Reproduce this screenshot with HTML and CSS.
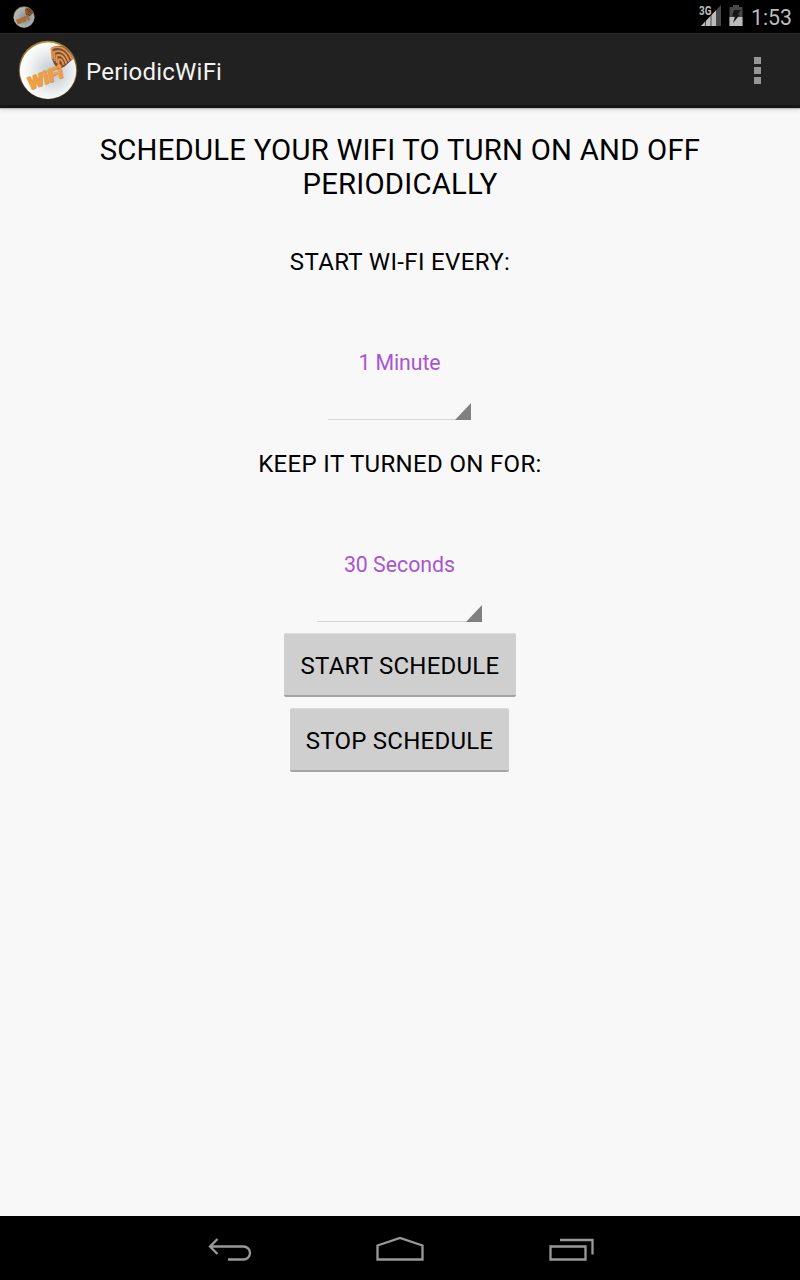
FILE: index.html
```html
<!DOCTYPE html>
<html lang="en">
<head>
<meta charset="utf-8">
<title>PeriodicWiFi</title>
<link rel="stylesheet" href="styles.css">
</head>
<body>
<svg width="0" height="0" class="defs" aria-hidden="true">
  <defs>
    <radialGradient id="disc" cx="58%" cy="52%" r="55%">
      <stop offset="0" stop-color="#bcc2c8"/><stop offset=".35" stop-color="#d5dadd"/><stop offset=".75" stop-color="#f1f4f4"/><stop offset="1" stop-color="#fdfdfd"/>
    </radialGradient>
    <linearGradient id="rim" x1="0" y1="0" x2="0" y2="1">
      <stop offset="0" stop-color="#b58a38"/><stop offset=".5" stop-color="#7c602c"/><stop offset="1" stop-color="#55432a"/>
    </linearGradient>
    <clipPath id="round"><circle cx="30" cy="30" r="29"/></clipPath>
    <symbol id="logo" viewBox="0 0 60 60">
      <circle cx="30" cy="30" r="29.3" fill="url(#rim)"/>
      <circle cx="30" cy="30.800" r="28.200" fill="url(#disc)"/>
      <g clip-path="url(#round)">
        <path d="M33.500 7.500Q39 4.500 45 6.500Q52 10 55 19L46 27L40 29L36 24L34 19Z" fill="#7a4c35"/>
        <g fill="none" stroke="#e09550" stroke-width="1.900">
          <path d="M34.500 19L33.500 8.500Q47 3 54 19.500"/><path d="M36.800 21L36 12Q46 8 51 21.500"/><path d="M38.800 23L38.500 15.500Q45 13 48.300 23.500"/><path d="M40.500 26V19.500Q44 18 45.500 25"/>
        </g>
        <g transform="rotate(-21 27 36)" class="wordmark">
          <text x="8.600" y="44.600" fill="#a86c38" textLength="37" lengthAdjust="spacingAndGlyphs">WiFi</text>
          <text x="8" y="44" fill="#efa044" stroke="#efa044" stroke-width=".8" textLength="37" lengthAdjust="spacingAndGlyphs">WiFi</text>
        </g>
      </g>
    </symbol>
  </defs>
</svg>
<div class="screen">
  <header class="status">
    <svg class="status-logo" viewBox="0 0 60 60"><use href="#logo"/></svg>
    <svg class="signal" width="24" height="24" viewBox="0 0 24 24">
      <path d="M2 23L22 2V23Z" fill="#484848"/>
      <path d="M2 23L18 6.200V23Z" fill="#bcbcbc"/>
      <path d="M6.500 15V23M12 10V23M17.500 5V23" stroke="#000" stroke-width=".6"/>
      <path d="M0 1H13V10.500L11 13H0Z" fill="#000"/>
      <text x="0" y="12" textLength="12.500" lengthAdjust="spacingAndGlyphs" class="network">3G</text>
    </svg>
    <svg class="battery" width="14" height="22" viewBox="0 0 14 22">
      <path d="M4 0H10V2H13.500V21H.5V2H4Z" fill="#484848"/>
      <path d="M.5 12H13.500V21H.5Z" fill="#bcbcbc"/>
      <path d="M5 5H12L8.500 9.500H11L4 18L6 11.500H3Z" fill="#161616"/>
    </svg>
    <span class="clock">1:53</span>
  </header>
  <div class="bar">
    <svg class="bar-logo" viewBox="0 0 60 60"><use href="#logo"/></svg>
    <h1>PeriodicWiFi</h1>
    <div class="overflow"><i></i><i></i><i></i></div>
  </div>
  <main>
    <h2>SCHEDULE YOUR WIFI TO TURN ON AND OFF<br>PERIODICALLY</h2>
    <p class="label every">START WI-FI EVERY:</p>
    <div class="spinner minute"><span>1 Minute</span><svg class="corner" viewBox="0 0 16 17"><path d="M0 17L16 0V17Z"/></svg></div>
    <p class="label keep">KEEP IT TURNED ON FOR:</p>
    <div class="spinner seconds"><span>30 Seconds</span><svg class="corner" viewBox="0 0 16 17"><path d="M0 17L16 0V17Z"/></svg></div>
    <button class="start">START SCHEDULE</button>
    <button class="stop">STOP SCHEDULE</button>
  </main>
  <nav>
    <svg class="back" width="44" height="26" viewBox="0 0 44 26"><path d="M2 10.500H35.500a6.500 6.500 0 0 1 0 13H20M9.500 3L2 10.500L9.500 18"/></svg>
    <svg width="48" height="26" viewBox="0 0 48 26"><path d="M1.500 9.500L24 2L46.500 9.500V23.500H1.500Z"/></svg>
    <svg width="46" height="26" viewBox="0 0 46 26"><path d="M1.500 10.500H36.500V23.500H1.500ZM11 4H43.500V18.500"/></svg>
  </nav>
</div>
</body>
</html>
```
FILE: styles.css
```css
* { box-sizing: border-box; }
body { margin: 0; font-family: Roboto, sans-serif; background: #f8f8f8; }
.defs { position: absolute; }
.wordmark { font: italic 900 18px Roboto, sans-serif; }
.screen { width: 800px; height: 1280px; display: flex; flex-direction: column; }
.status { height: 33px; background: #000; display: flex; align-items: flex-start; padding: 0 8px 0 13px; }
.status-logo { width: 22px; height: 22px; margin: 6px auto 0 0; opacity: .72; }
.signal { margin: 3px 6px 0 0; }
.network { font: bold 13px Roboto, sans-serif; fill: #bcbcbc; }
.battery { margin: 5px 8px 0 0; }
.clock { font-size: 21.3px; line-height: 25px; margin-top: 5px; color: #bcbcbc; }
.bar { height: 75px; background: #212121; border-top: 1px solid #2a2a2a; border-bottom: 3px solid #161616; display: flex; align-items: center; padding: 1px 39px 0 18px; box-shadow: 0 1px 1px #bbb, 0 3px 3px #e4e4e4; }
.bar-logo { width: 60px; height: 60px; margin: 0 8px 0 0; }
h1 { margin: 3px auto 0 0; font-weight: 400; font-size: 24px; line-height: 28px; letter-spacing: .22px; color: #f3f3f3; }
.overflow { display: grid; gap: 3px; margin-top: 1px; }
.overflow i { width: 7px; height: 7px; background: #969696; }
main { flex: 1; display: flex; flex-direction: column; align-items: center; color: #000; }
h2 { margin: 25px 0 0; font-weight: 400; font-size: 29.3px; line-height: 34px; letter-spacing: .22px; text-align: center; white-space: nowrap; }
.label { margin: 0; font-size: 24px; line-height: 28px; letter-spacing: .34px; white-space: nowrap; }
.every { margin-top: 47px; }
.spinner { height: 70px; border-bottom: 1px solid #d4d4d4; text-align: center; position: relative; font-size: 21.3px; line-height: 25px; color: #a955cf; }
.minute { width: 143px; margin: 74px 1px 0 0; }
.minute span { letter-spacing: -.1px; }
.keep { margin-top: 30px; }
.seconds { width: 165px; margin: 74px 1px 0 0; }
.corner { position: absolute; right: 0; bottom: -1px; width: 16px; height: 17px; fill: #808080; }
button { height: 64px; border: 0; border-top: 1px solid #dadada; border-bottom: 2px solid #a5a5a5; border-radius: 2px; background: #cfcfcf; color: #000; font: 400 24px/28px Roboto, sans-serif; letter-spacing: .24px; padding: 3px 0 0; white-space: nowrap; }
.start { width: 232px; margin-top: 11px; }
.stop { width: 219px; margin: 11px 1px 0 0; }
nav { height: 64px; background: #000; display: flex; align-items: center; justify-content: center; gap: 125px; padding: 2px 0 0 2px; }
nav path { fill: none; stroke: #999; stroke-width: 2.3; }
.back { margin: 0 -1px 0 1px; }
```
